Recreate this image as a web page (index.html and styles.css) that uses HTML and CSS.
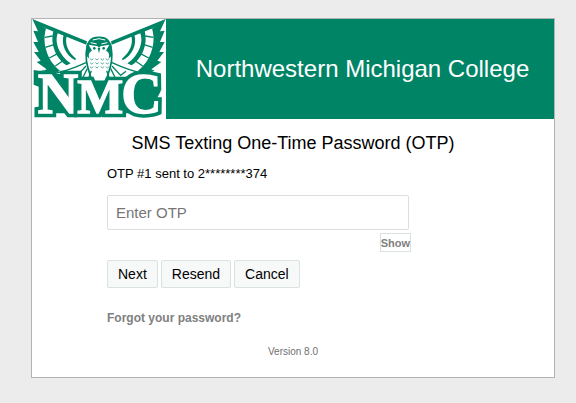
FILE: index.html
```
<!DOCTYPE html>
<html lang="en">
<head>
    <meta charset="utf-8">
    <meta name="viewport" content="width=device-width, initial-scale=1.0">
    <title>Northwestern Michigan College</title>
    <link rel="stylesheet" href="styles.css">
</head>

<body>
<main class="card">
    <header>
        <svg class="logo" viewBox="0 3 402 300" role="img" aria-label="NMC">
            <defs>
                <g id="wing">
                    <path class="green" d="M1 3 L42 32 C36 50 36 76 42 94 C48 118 62 142 84 158 L62 170 L34 158 L44 154 L14 132 L26 128 L6 102 L20 102 L4 72 L18 72 L4 38 L18 40 Z"/>
                    <path class="green" d="M1 3 L165 70 L163 80 L40 31 L20 20 Z"/>
                    <path class="green" d="M64 38 L78 44 C70 62 74 84 86 104 C94 118 104 128 116 136 L104 142 C90 134 76 118 68 98 C60 78 59 58 64 38 Z"/>
                    <path class="green" d="M95 50 L104 54 C98 78 108 102 132 122 L130 127 C102 112 86 80 95 50 Z"/>
                    <path class="line" d="M38 58 L62 54 M40 88 L66 80 M52 120 L78 106 M70 144 L96 126"/>
                    <path class="line" d="M62 168 Q110 158 162 134 M120 160 L136 172 L162 144"/>
                </g>
            </defs>
            <use href="#wing"/>
            <use href="#wing" transform="matrix(-1 0 0 1 402 0)"/>
            <!-- owl -->
            <path class="owl" d="M172 70 C182 54 220 54 230 70 C242 90 242 126 234 150 L222 190 H180 L168 150 C160 126 160 90 172 70 Z"/>
            <path class="green" d="M163 84 C172 50 230 50 239 84 L238 114 L230 122 C234 108 230 102 222 98 L232 80 L205 85 L201 90 L197 85 L170 80 L180 98 C172 102 168 108 172 122 L164 114 Z"/>
            <path class="brow" d="M182 66 Q201 58 220 66 M176 74 L194 78 M208 78 L226 74"/>
            <circle class="green" cx="187" cy="91" r="4"/>
            <circle class="green" cx="215" cy="91" r="4"/>
            <path class="green" d="M197 90 H205 L201 106 Z"/>
            <path class="speck" d="M174 122 l5 4 l5 -4 M190 122 l5 4 l5 -4 M206 122 l5 4 l5 -4 M221 122 l5 4 l5 -4 M174 134 l5 4 l5 -4 M190 134 l5 4 l5 -4 M206 134 l5 4 l5 -4 M221 134 l5 4 l5 -4 M174 146 l5 4 l5 -4 M190 146 l5 4 l5 -4 M206 146 l5 4 l5 -4 M221 146 l5 4 l5 -4"/>
            <path class="line" d="M166 152 L152 180 M178 158 L168 186 M236 152 L250 180 M224 158 L234 186"/>
            <!-- letters -->
            <path class="green" d="M5 156 L64 168 L130 168 L138 184 L196 190 L270 186 C290 166 330 158 386 168 L386 220 L360 270 L300 286 H20 V206 L5 200 Z"/>
            <g class="outline">
                <text x="17" y="286" font-size="168">N</text>
                <text x="136" y="286" font-size="146">M</text>
                <text x="268" y="286" font-size="168">C</text>
            </g>
            <g class="letters">
                <text x="17" y="286" font-size="168">N</text>
                <text x="136" y="286" font-size="146">M</text>
                <text x="268" y="286" font-size="168">C</text>
            </g>
        </svg>
        <h1>Northwestern Michigan College</h1>
    </header>

    <h2>SMS Texting One-Time Password (OTP)</h2>

    <form>
        <label for="otp">OTP #1 sent to 2********374</label>
        <input id="otp" type="password" placeholder="Enter OTP">
        <button type="button" class="show">Show</button>
        <div class="buttons">
            <button type="submit">Next</button>
            <button type="button">Resend</button>
            <button type="button">Cancel</button>
        </div>
        <a href="#">Forgot your password?</a>
    </form>

    <footer>Version 8.0</footer>
</main>
</body>
</html>
```
FILE: styles.css
```
* {
    box-sizing: border-box;
}
body {
    margin: 0;
    padding: 18px 21px 24px 31px;
    background: #ececec;
    font-family: "Liberation Sans", Arial, sans-serif;
    color: #000;
}
.card {
    background: #fff;
    border: 1px solid #b3b3b3;
}
header {
    display: flex;
    background: #008466;
}
.logo {
    flex: none;
    width: 134px;
    height: 100px;
    background: #fff;
    overflow: visible;
}
.green {
    fill: #008466;
}
.line, .speck {
    fill: none;
    stroke: #008466;
    stroke-width: 4;
}
.speck {
    stroke-width: 2;
}
.brow {
    fill: none;
    stroke: #fff;
    stroke-width: 3;
}
.owl {
    fill: #fff;
    stroke: #008466;
    stroke-width: 5;
}
.outline, .letters {
    font-family: "Liberation Serif", serif;
    font-weight: bold;
    fill: #fff;
    stroke: #fff;
    stroke-width: 4;
}
.outline {
    fill: #008466;
    stroke: #008466;
    stroke-width: 26;
}
h1 {
    flex: 1;
    margin: 0;
    padding-left: 5px;
    font-size: 24px;
    font-weight: normal;
    line-height: 100px;
    text-align: center;
    color: #fff;
}
h2 {
    margin: 14px 0 12px;
    font-size: 18px;
    font-weight: normal;
    line-height: 20px;
    text-align: center;
}
form {
    display: flex;
    flex-direction: column;
    align-items: flex-start;
    max-width: 379px;
    padding-left: 75px;
}
label {
    margin-bottom: 12px;
    font-size: 13px;
    line-height: 18px;
}
input {
    width: 302px;
    max-width: 100%;
    height: 35px;
    padding: 0 8px;
    border: 1px solid #dbdfdf;
    border-radius: 2px;
    font-family: inherit;
    font-size: 15px;
}
input::placeholder {
    color: #757575;
}
button {
    height: 28px;
    padding: 0 10px;
    border: 1px solid #dae1e1;
    border-radius: 2px;
    background: #f7f9f9;
    font-family: inherit;
    font-size: 14px;
    color: #000;
}
.show {
    align-self: flex-end;
    height: 19px;
    margin: 3px 0 8px;
    padding: 0;
    border-radius: 0;
    background: #fff;
    font-size: 11px;
    font-weight: bold;
    color: #808080;
}
.buttons {
    display: flex;
    gap: 3px;
}
a {
    margin-top: 22px;
    font-size: 12px;
    font-weight: bold;
    line-height: 16px;
    color: #808080;
    text-decoration: none;
}
footer {
    padding: 20px 0 19px;
    font-size: 10px;
    line-height: 12px;
    text-align: center;
    color: #707070;
}
```
